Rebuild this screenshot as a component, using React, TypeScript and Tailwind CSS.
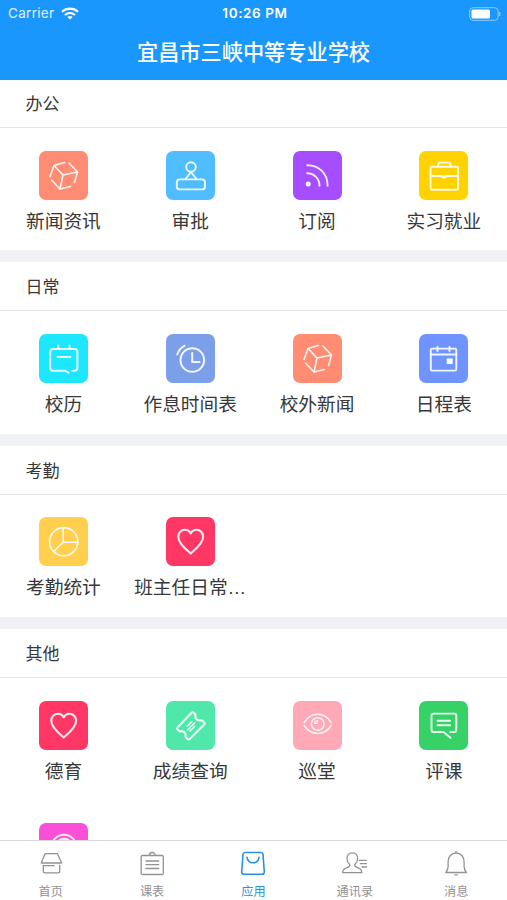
import type { ReactNode } from "react";

type AppItem = { name: string; color: string; icon: ReactNode; truncated?: boolean };

/* ── TILE ICONS (drawn on the 49px tile grid) ─────────────────── */
const cube = (
  <g strokeWidth="1.6">
    <path d="M25.5 11.5 15 14.5 11 25.5M30 12l8.5 9-3 10.5M12.5 29l8.5 9 10.5-2.5" />
    <path d="m15 14.5 9 9.5 14.5-3M24 24l-3 14" />
  </g>
);

const stamp = (
  <g>
    <circle cx="25" cy="16" r="4.8" />
    <path d="m25 21-5.5 7M25 21l5.500 7" />
    <rect x="10.8" y="28.4" width="28.2" height="10" rx="3" />
  </g>
);

const rss = (
  <g>
    <circle cx="15.2" cy="33" r="2.5" fill="#fff" stroke="none" />
    <path d="M14.2 14.2c12 0 20.400 8.500 20.400 20.500M14.200 22.200c7 0 12.300 5.500 12.300 12.500" />
  </g>
);

const briefcase = (
  <g>
    <rect x="11.5" y="15.7" width="27.5" height="23" rx="1.5" />
    <path d="M18.700 15.500 20 11.600h10.700l1.300 3.900M11.500 25h10.500M28 25h11" />
    <path d="M21.500 25.200c2 2.600 5 2.600 7 0z" fill="#fff" strokeWidth="1" />
  </g>
);

const note = (
  <g strokeWidth="2">
    <path d="M29.500 38.600 26.300 36.800H14.200a3 3 0 0 1-3-3V18a3 3 0 0 1 3-3h21.200a3 3 0 0 1 3 3v15.800a3 3 0 0 1-3 3h-2" />
    <path d="M19.200 11.500V15M30.500 11.500V15M18.500 23h13" />
  </g>
);

const clock = (
  <g>
    <circle cx="26.3" cy="26" r="11.8" strokeWidth="2" />
    <path d="M26.200 19v9h7.300" strokeWidth="2" />
    <path d="M11.200 20.500c1.500-4 4-7 7.500-8.800" />
  </g>
);

const calendar = (
  <g>
    <rect x="11.8" y="14.6" width="25.5" height="22" rx="1.2" />
    <path d="M11.800 20.500h25.500M18.500 12.700v4.500M30.500 12.700v4.500" />
    <rect x="27.7" y="24.5" width="6" height="5.5" fill="#fff" stroke="none" />
  </g>
);

const pie = (
  <g strokeWidth="1.6">
    <circle cx="24.7" cy="24.7" r="14.1" />
    <path d="M24.200 10.700v14.500h14.500M24.200 25.200 14.700 34.500" />
  </g>
);

const heart = (
  <path
    d="M24.700 36.500C20.500 32.500 12.300 26.800 12.300 19.700c0-4 3-6.900 6.500-6.900 2.600 0 4.700 1.400 5.900 3.600 1.200-2.200 3.300-3.600 5.900-3.600 3.500 0 6.500 2.900 6.500 6.900 0 7.100-8.200 12.800-12.400 16.800z"
    strokeWidth="2.1"
  />
);

const ticket = (
  <g strokeWidth="2.1">
    <path d="M25.600 11.800a1.500 1.500 0 0 1 2.200 0l1.700 1.700c-1 4 1.700 6.700 5.800 5.700l2.800 2a1.500 1.500 0 0 1 .1 2.200L23.700 38a1.500 1.500 0 0 1-2.200 0l-2-2.200c1-3.700-1.700-6.300-5.600-5.400L11.500 28.600a1.500 1.500 0 0 1 0-2.200z" />
    <path d="m21.500 25 4.500-4.500M21.500 29l7-7M24 30l4.500-4.500" strokeWidth="1.6" />
  </g>
);

const eye = (
  <g strokeWidth="1.5">
    <path d="M11.200 21.500c6.500-11 20.500-11 27 0M11.200 24.500c6.500 10.500 20.500 10.500 27 0" />
    <circle cx="24.7" cy="23" r="6.300" />
    <path d="M21.700 22.500a3 3 0 0 1 3-3M24.200 20v2.500h-2.500" strokeWidth="1.2" />
  </g>
);

const comment = (
  <g>
    <path d="M31.500 36.800 24.500 31h-10a2 2 0 0 1-2-2V14.600a2 2 0 0 1 2-2h20.800a2 2 0 0 1 2 2V29a2 2 0 0 1-2 2h-4" />
    <path d="M18.500 19.700h12.500M18.500 24.300h12.500" />
  </g>
);

const signal = (
  <g strokeWidth="2">
    <circle cx="25" cy="24" r="12.300" />
    <circle cx="25" cy="24" r="8.300" />
  </g>
);

const sections: { title: string; items: AppItem[] }[] = [
  {
    title: "办公",
    items: [
      { name: "新闻资讯", color: "bg-[#ff8c73]", icon: cube },
      { name: "审批", color: "bg-[#4fbdff]", icon: stamp },
      { name: "订阅", color: "bg-[#a64dff]", icon: rss },
      { name: "实习就业", color: "bg-[#ffd200]", icon: briefcase },
    ],
  },
  {
    title: "日常",
    items: [
      { name: "校历", color: "bg-[#1de6ff]", icon: note },
      { name: "作息时间表", color: "bg-[#7c9fe9]", icon: clock },
      { name: "校外新闻", color: "bg-[#ff8c73]", icon: cube },
      { name: "日程表", color: "bg-[#7094ff]", icon: calendar },
    ],
  },
  {
    title: "考勤",
    items: [
      { name: "考勤统计", color: "bg-[#ffcf4d]", icon: pie },
      { name: "班主任日常", color: "bg-[#ff3764]", icon: heart, truncated: true },
    ],
  },
  {
    title: "其他",
    items: [
      { name: "德育", color: "bg-[#ff3764]", icon: heart },
      { name: "成绩查询", color: "bg-[#50e8aa]", icon: ticket },
      { name: "巡堂", color: "bg-[#ffa8b6]", icon: eye },
      { name: "评课", color: "bg-[#36d268]", icon: comment },
      { name: "", color: "bg-[#fb4fd8]", icon: signal },
    ],
  },
];

/* ── TAB BAR ICONS (24px grid) ────────────────────────────────── */
const tabs = [
  {
    name: "首页",
    icon: (
      <path d="M6 2.700h12.500L22.700 12H2.300zM4.300 14.500v6a1.300 1.300 0 0 0 1.300 1.300h13.800a1.300 1.300 0 0 0 1.300-1.300v-6M4.300 14.700h11" />
    ),
  },
  {
    name: "课表",
    icon: (
      <path d="M2.500 4.500h19.500a1.300 1.300 0 0 1 1.300 1.300v16.400a1.300 1.300 0 0 1-1.300 1.300H2.500a1.300 1.300 0 0 1-1.300-1.300V5.800a1.300 1.300 0 0 1 1.300-1.300zM9.300 4.500a3 3 0 0 1 6 0M6 10h12.700M6 13.700h12.700M6 17.500h12.700" />
    ),
  },
  {
    name: "应用",
    active: true,
    icon: (
      <path d="M4 1.500h16a2 2 0 0 1 2 1.800l1.300 17.700a2.200 2.200 0 0 1-2.200 2.300H2.900A2.200 2.200 0 0 1 .7 21L2 3.300a2 2 0 0 1 2-1.800zM6 6.300c1.200 7.300 10.800 7.300 12 0" />
    ),
  },
  {
    name: "通讯录",
    icon: (
      <path d="M9.300 1.800c-3.500 0-5.300 2.500-5.300 5.600 0 2.600 1 4.600 2.600 5.900.6 1.700.1 2.200-1.300 2.800l-3.500 1.500C.3 18.300-.3 19.300-.4 21.600h19.200c-.1-2.300-.6-3.300-2.100-4l-3.400-1.500c-1.400-.6-1.900-1.100-1.300-2.800 1.600-1.300 2.600-3.300 2.600-5.900 0-3.100-1.800-5.600-5.300-5.600zM16.300 9.300h7M17.500 12.700h6M19 16h4.500" />
    ),
  },
  {
    name: "消息",
    icon: (
      <path d="M1.800 21.500h20.600c-1.700-2-2.300-3.300-2.300-6v-4.500c0-5.300-3.200-9-8-9s-8 3.700-8 9v4.500c0 2.700-.6 4-2.300 6zM12 .5V2M10.800 23.800h2.500" />
    ),
  },
];

function StatusBar() {
  return (
    <div className="flex h-[27px] items-center pl-2 pr-[5px] font-['Inter',sans-serif] text-[13.5px] leading-none">
      <div className="flex flex-1 items-center gap-[7px]">
        <span className="tracking-[0.3px] text-white/85">Carrier</span>
        <svg width="18" height="13" viewBox="0 0 18 13" fill="none" stroke="#fff" strokeWidth="2.2">
          <path d="M1 4.700c4.600-4.200 11.400-4.200 16 0M4 8c3-2.600 7-2.600 10 0" />
          <path d="M9 12.500 6.300 9.900c1.600-1.300 3.800-1.300 5.400 0z" fill="#fff" stroke="none" />
        </svg>
      </div>
      <span className="font-semibold tracking-[0.6px]">10:26 PM</span>
      <div className="flex flex-1 justify-end">
        <svg width="33" height="14" viewBox="0 0 33 14" fill="none">
          <rect x="0.7" y="0.7" width="28.500" height="12.6" rx="3.5" stroke="#fff" strokeOpacity="0.5" />
          <rect x="2.5" y="2.5" width="18.5" height="9" rx="1.5" fill="#fff" />
          <path d="M30.700 5v4" stroke="#fff" strokeOpacity="0.5" strokeWidth="1.3" />
        </svg>
      </div>
    </div>
  );
}

export default function App() {
  return (
    <div className="flex h-[900px] w-[507px] flex-col overflow-hidden bg-white font-['Noto_Sans_CJK_SC',sans-serif] text-[#383838]">
      <header className="relative z-10 h-20 shrink-0 bg-[#1997fc] text-white">
        <StatusBar />
        <h1 className="text-center text-[21.2px] font-medium leading-[48px]">宜昌市三峡中等专业学校</h1>
      </header>

      <main className="-mt-px flex min-h-0 flex-1 flex-col gap-3 overflow-hidden bg-[#eff1f4]">
        {sections.map((section) => (
          <section key={section.title} className="shrink-0 bg-white">
            <h2 className="h-[49px] border-b border-[#e4e4e4] pl-[25.5px] text-[17px] leading-[47px]">
              {section.title}
            </h2>
            <div className="grid w-[507.3px] grid-cols-4">
              {section.items.map((item, i) => (
                <div key={i} className="flex h-[122.4px] flex-col items-center pt-[22.7px]">
                  <div className={`size-[49px] shrink-0 rounded-[7px] ${item.color}`}>
                    <svg
                      viewBox="0 0 49 49"
                      className="size-full"
                      fill="none"
                      stroke="#fff"
                      strokeOpacity="0.9"
                      strokeWidth="1.9"
                      strokeLinecap="round"
                      strokeLinejoin="round"
                    >
                      {item.icon}
                    </svg>
                  </div>
                  <span className="mt-1.5 whitespace-nowrap text-[18.7px] leading-7">
                    {item.name}
                    {item.truncated && <span className="font-['Liberation_Sans',sans-serif] leading-none">…</span>}
                  </span>
                </div>
              ))}
            </div>
          </section>
        ))}
      </main>

      <nav className="grid h-[60px] shrink-0 grid-cols-5 border-t border-[#d9d9d9] bg-white">
        {tabs.map((tab) => (
          <div
            key={tab.name}
            className={`flex flex-col items-center pt-2.5 ${tab.active ? "text-[#2d8fe0]" : "text-[#929292]"}`}
          >
            <svg
              viewBox="0 0 24 24"
              className="size-6 shrink-0 overflow-visible"
              fill="none"
              stroke="currentColor"
              strokeWidth={tab.active ? 1.6 : 1.3}
              strokeLinecap="round"
              strokeLinejoin="round"
            >
              {tab.icon}
            </svg>
            <span className="mt-2 text-[12.2px] leading-4">{tab.name}</span>
          </div>
        ))}
      </nav>
    </div>
  );
}
